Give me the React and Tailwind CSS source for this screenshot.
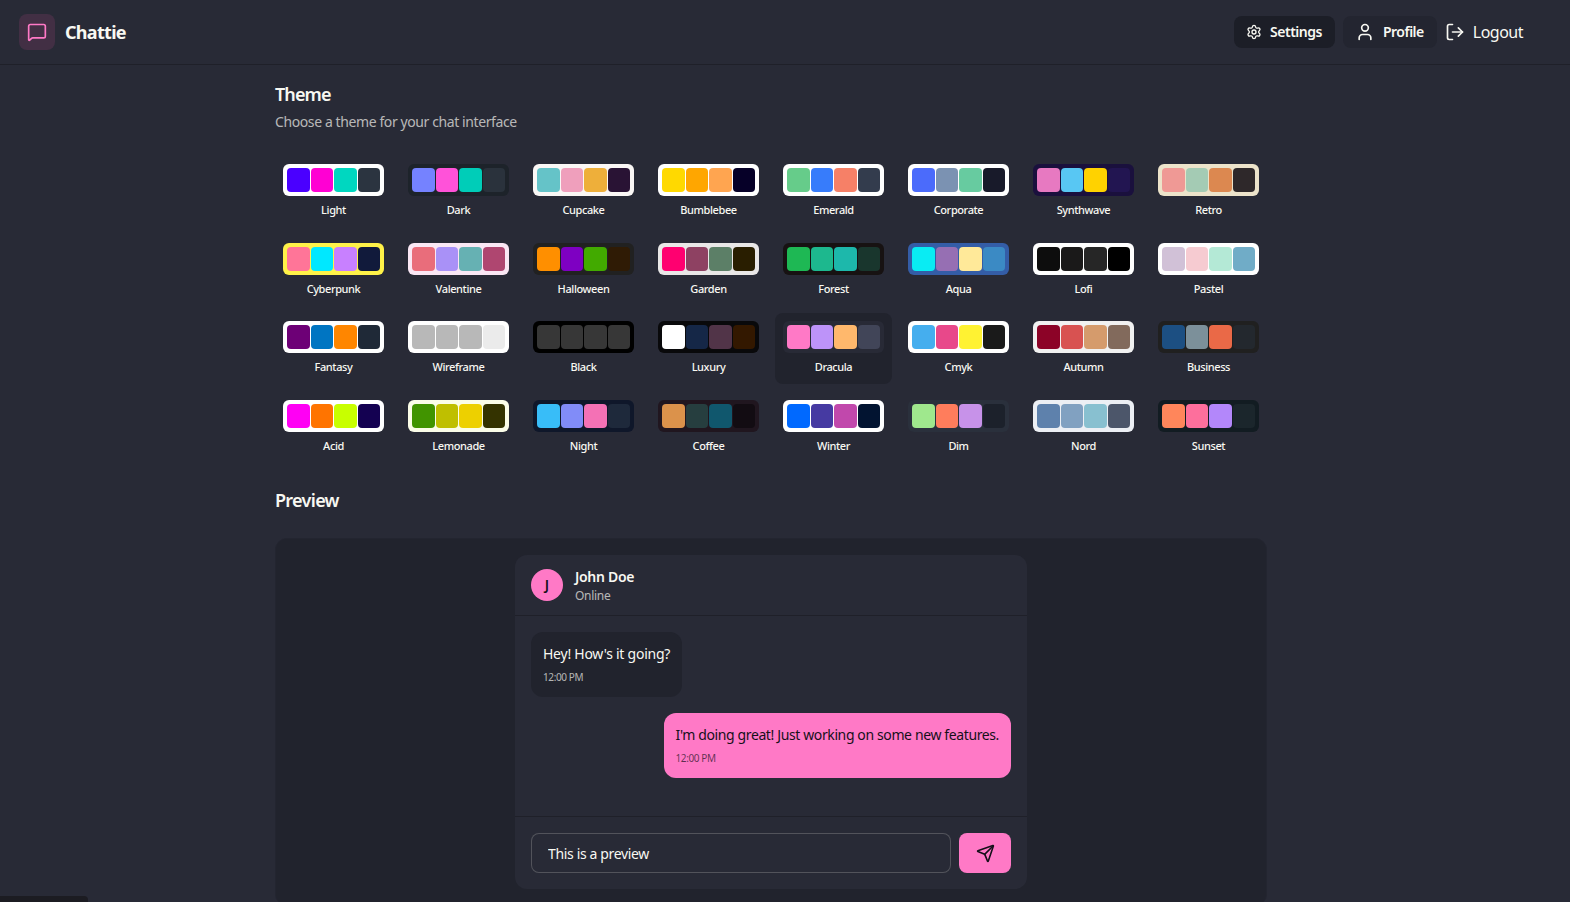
import React from 'react';
import { MessageSquare, Settings, User, LogOut, Send } from 'lucide-react';

const THEMES = [
  { name: 'Light', bg: '#ffffff', c: ['#4a00ff', '#ff00d3', '#00d7c0', '#2b3440'] },
  { name: 'Dark', bg: '#1d232a', c: ['#7582ff', '#ff52d9', '#00cdb8', '#2a323c'] },
  { name: 'Cupcake', bg: '#faf7f5', c: ['#65c3c8', '#ef9fbc', '#eeaf3a', '#291334'] },
  { name: 'Bumblebee', bg: '#ffffff', c: ['#ffd900', '#ffa600', '#ffa550', '#060028'] },
  { name: 'Emerald', bg: '#ffffff', c: ['#66cc8a', '#377cfb', '#f68067', '#333c4d'] },
  { name: 'Corporate', bg: '#ffffff', c: ['#4b6bfb', '#7b92b2', '#67cba0', '#181a2a'] },
  { name: 'Synthwave', bg: '#1a103d', c: ['#e779c1', '#58c7f3', '#ffd200', '#221551'] },
  { name: 'Retro', bg: '#ece3ca', c: ['#ef9995', '#a4cbb4', '#dc8850', '#2e282a'] },
  { name: 'Cyberpunk', bg: '#fff248', c: ['#ff7598', '#00e8ff', '#c880ff', '#111a3b'] },
  { name: 'Valentine', bg: '#fae7f4', c: ['#e96d7b', '#a991f7', '#66b1b3', '#af4670'] },
  { name: 'Halloween', bg: '#212121', c: ['#ff8f00', '#7e00c2', '#42aa00', '#2f1b05'] },
  { name: 'Garden', bg: '#e9e7e7', c: ['#ff0070', '#8e4162', '#5c7f67', '#291e00'] },
  { name: 'Forest', bg: '#171212', c: ['#1eb854', '#1db88e', '#1db8ab', '#19362d'] },
  { name: 'Aqua', bg: '#345da7', c: ['#09ecf3', '#966fb3', '#ffe999', '#3b8ac4'] },
  { name: 'Lofi', bg: '#ffffff', c: ['#0d0d0d', '#1a1919', '#262626', '#000000'] },
  { name: 'Pastel', bg: '#ffffff', c: ['#d1c1d7', '#f6cbd1', '#b4e9d6', '#70acc7'] },
  { name: 'Fantasy', bg: '#ffffff', c: ['#6d0076', '#0075c2', '#ff8600', '#1f2937'] },
  { name: 'Wireframe', bg: '#ffffff', c: ['#b8b8b8', '#b8b8b8', '#b8b8b8', '#ebebeb'] },
  { name: 'Black', bg: '#000000', c: ['#373737', '#373737', '#373737', '#373737'] },
  { name: 'Luxury', bg: '#09090b', c: ['#ffffff', '#152747', '#513448', '#331800'] },
  { name: 'Dracula', bg: '#282a36', c: ['#ff79c6', '#bd93f9', '#ffb86c', '#414558'] },
  { name: 'Cmyk', bg: '#ffffff', c: ['#45aeee', '#e8488a', '#fff232', '#1a1a1a'] },
  { name: 'Autumn', bg: '#f1f1f1', c: ['#8c0327', '#d85251', '#d59b6c', '#826a5c'] },
  { name: 'Business', bg: '#202020', c: ['#1c4f82', '#7c909a', '#ea6947', '#23282e'] },
  { name: 'Acid', bg: '#ffffff', c: ['#ff00f4', '#ff7400', '#c8ff00', '#140151'] },
  { name: 'Lemonade', bg: '#fbfde8', c: ['#419400', '#bfbf00', '#edd000', '#343300'] },
  { name: 'Night', bg: '#0f172a', c: ['#38bdf8', '#818cf8', '#f471b5', '#1e293b'] },
  { name: 'Coffee', bg: '#20161f', c: ['#db924b', '#263e3f', '#10576d', '#120c12'] },
  { name: 'Winter', bg: '#ffffff', c: ['#0069ff', '#463aa2', '#c148ac', '#021431'] },
  { name: 'Dim', bg: '#2a303c', c: ['#9fe88d', '#ff7d5c', '#c792e9', '#1c212b'] },
  { name: 'Nord', bg: '#eceff4', c: ['#5e81ac', '#81a1c1', '#88c0d0', '#4c566a'] },
  { name: 'Sunset', bg: '#121c22', c: ['#ff865b', '#fd6f9c', '#b387fa', '#1b262c'] },
];

const ThemeButton = ({ theme }) => {
  const selected = theme.name === 'Dracula';
  return (
    <button className={`flex flex-col gap-1.5 p-2 rounded-lg ${selected ? 'bg-[#21232d]' : ''}`}>
      <div className="h-8 w-full rounded-md overflow-hidden p-1 grid grid-cols-4 gap-px" style={{ backgroundColor: theme.bg }}>
        {theme.c.map((color, i) => (
          <div key={i} className="rounded" style={{ backgroundColor: color }} />
        ))}
      </div>
      <span className="text-[11px] font-medium tracking-[-0.4px] w-full text-center truncate">{theme.name}</span>
    </button>
  );
};

export default function App() {
  return (
    <div className="h-[902px] overflow-hidden relative bg-[#282a36] text-[#f8f8f2] font-['Noto_Sans',sans-serif]">
      <header className="h-[65px] border-b border-[#1f2029] flex items-center justify-between pl-[19px] pr-[47px]">
        <div className="flex items-center gap-2.5">
          <div className="w-9 h-9 rounded-lg bg-[#422f44] flex items-center justify-center">
            <MessageSquare className="w-5 h-5 text-[#ff79c6]" />
          </div>
          <h1 className="text-lg font-bold tracking-[-0.7px]">Chattie</h1>
        </div>
        <div className="flex items-center gap-2">
          <button className="h-8 pl-3 pr-[13px] rounded-lg bg-[#1c1e27] flex items-center gap-2 text-sm font-semibold tracking-[-0.5px]">
            <Settings className="w-4 h-4" />
            Settings
          </button>
          <button className="h-8 pl-3 pr-[13px] rounded-lg bg-[#232530] flex items-center gap-2 text-sm font-semibold tracking-[-0.5px]">
            <User className="w-5 h-5" />
            Profile
          </button>
          <button className="flex items-center gap-2 text-base tracking-[-0.5px]">
            <LogOut className="w-5 h-5" />
            Logout
          </button>
        </div>
      </header>

      <main className="w-[1542px] pt-[15px]">
        <div className="max-w-5xl mx-auto px-4 flex flex-col gap-6">
          <div className="flex flex-col gap-1">
            <h2 className="text-lg font-semibold tracking-[-0.9px]">Theme</h2>
            <p className="text-sm text-[#f8f8f2]/70 tracking-[-0.4px]">Choose a theme for your chat interface</p>
          </div>

          <div className="grid grid-cols-8 gap-2">
            {THEMES.map((t) => (
              <ThemeButton key={t.name} theme={t} />
            ))}
          </div>

          <h3 className="text-lg font-semibold tracking-[-0.7px]">Preview</h3>

          <div className="rounded-xl border border-[#232530] bg-[#21232d] p-4">
            <div className="max-w-lg mx-auto rounded-xl bg-[#282a36] overflow-hidden">
              <div className="px-4 h-[61px] border-b border-[#1f2029] flex items-center gap-3">
                <div className="w-8 h-8 rounded-full bg-[#ff79c6] text-[#16101a] flex items-center justify-center font-semibold text-sm">J</div>
                <div>
                  <div className="text-sm font-semibold tracking-[-0.3px]">John Doe</div>
                  <div className="text-xs text-[#f8f8f2]/70 tracking-[-0.3px] pt-px">Online</div>
                </div>
              </div>

              <div className="p-4 h-[200px] flex flex-col gap-4">
                <div className="flex justify-start">
                  <div className="p-3 rounded-xl bg-[#21232d]">
                    <p className="text-sm tracking-[-0.25px]">Hey! How's it going?</p>
                    <p className="text-[10px] mt-1.5 text-[#f8f8f2]/70 tracking-[-0.4px]">12:00 PM</p>
                  </div>
                </div>
                <div className="flex justify-end">
                  <div className="p-3 rounded-xl bg-[#ff79c6] text-[#16101a]">
                    <p className="text-sm tracking-[-0.38px]">I'm doing great! Just working on some new features.</p>
                    <p className="text-[10px] mt-1.5 text-[#16101a]/70 tracking-[-0.4px]">12:00 PM</p>
                  </div>
                </div>
              </div>

              <div className="p-4 border-t border-[#1f2029] flex gap-2">
                <input
                  readOnly
                  value="This is a preview"
                  className="flex-1 h-10 px-4 text-sm tracking-[-0.35px] rounded-lg bg-[#282a36] border border-[#f8f8f2]/20 outline-none"
                />
                <button className="h-10 w-[52px] rounded-lg bg-[#ff79c6] text-[#16101a] flex items-center justify-center">
                  <Send className="w-[19px] h-[19px]" />
                </button>
              </div>
            </div>
          </div>
        </div>
      </main>

      <div className="absolute left-0 bottom-0 w-[88px] h-[6px] bg-[#1c1c22] rounded-tr" />
    </div>
  );
}
